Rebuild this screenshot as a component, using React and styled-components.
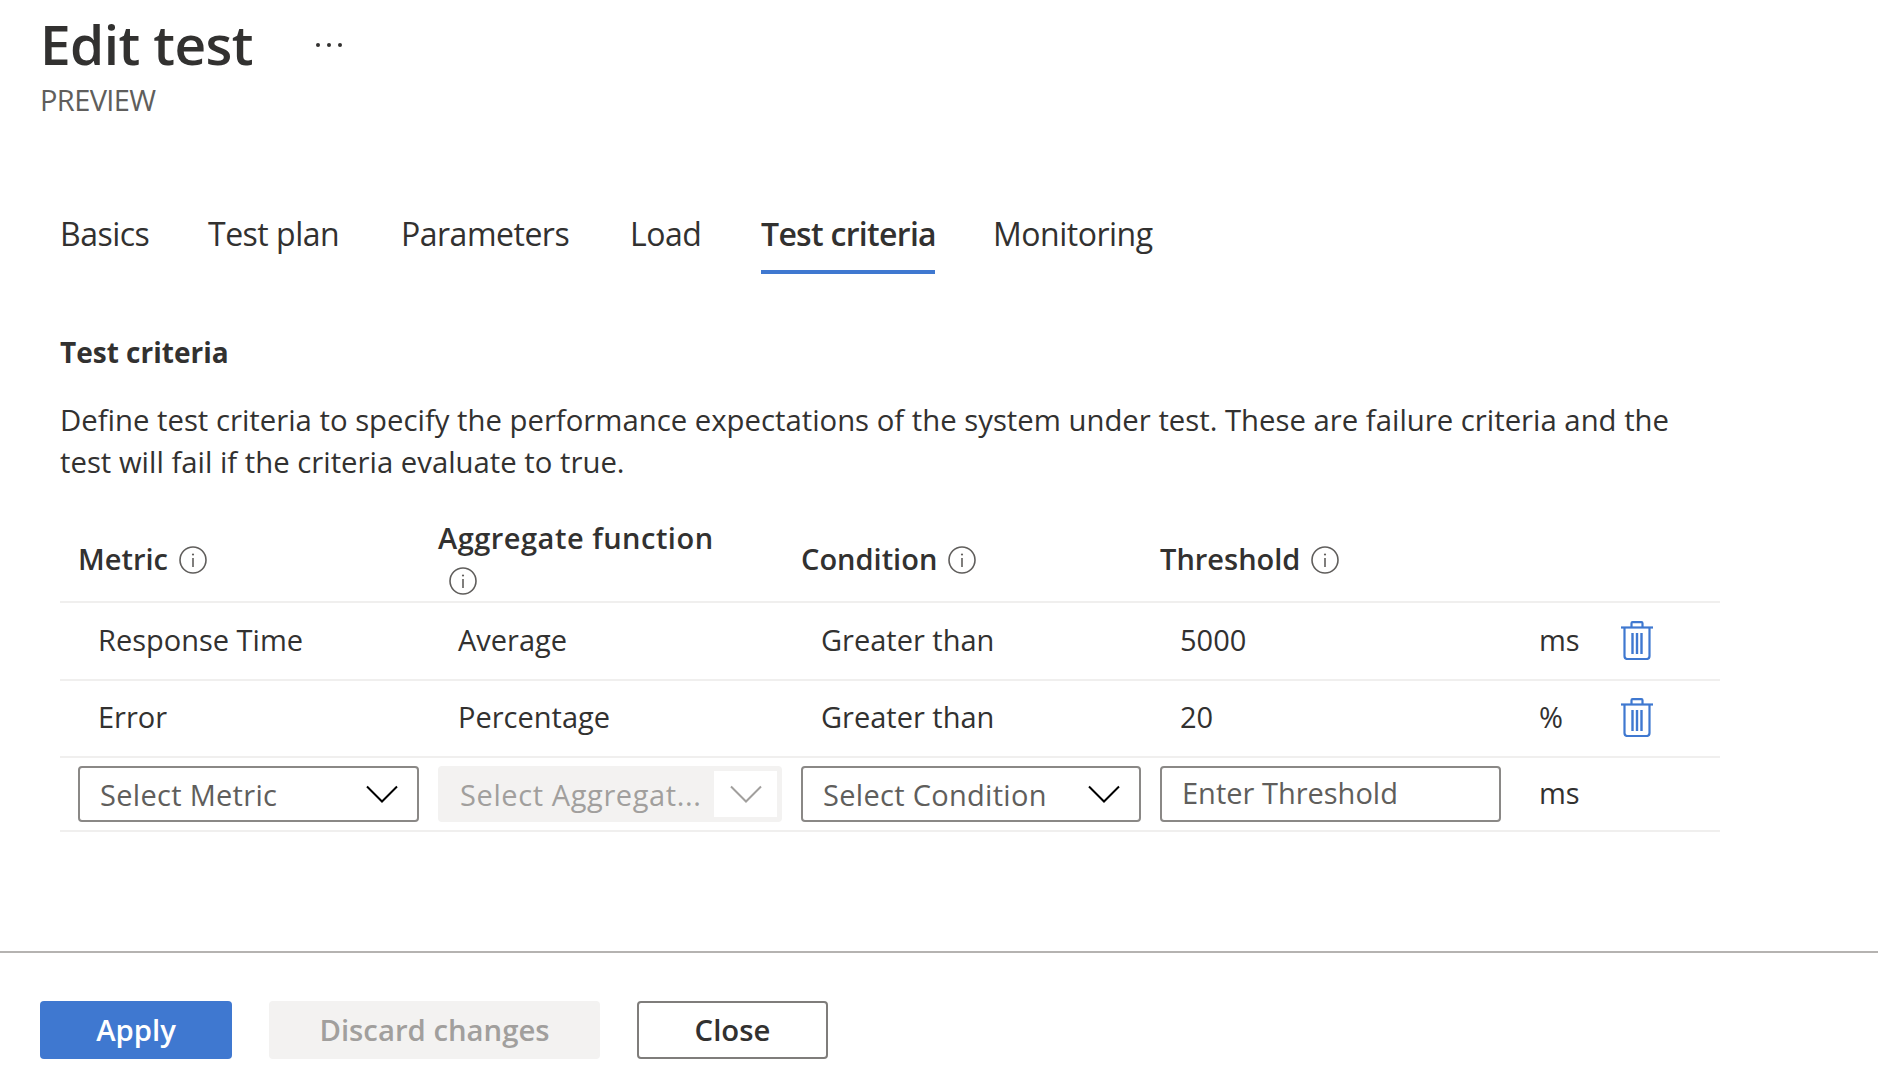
import React from "react";
import styled, { createGlobalStyle } from "styled-components";

const GlobalStyle = createGlobalStyle`
	html, body {
		margin: 0;
		padding: 0;
		background: #fff;
	}
	* {
		box-sizing: border-box;
	}
`;

const Page = styled.div`
	display: flex;
	flex-direction: column;
	min-height: 100vh;
	overflow: hidden;
	font-family: "Open Sans", "Noto Sans", sans-serif;
	color: #323130;
`;
const PageHeader = styled.header`
	padding: 10px 0 0 40px;
`;
const TitleRow = styled.div`
	display: flex;
	align-items: center;
	gap: 62px;
	height: 66px;
`;
const Title = styled.h1`
	margin: 0;
	font-size: 55px;
	font-weight: 600;
	letter-spacing: -0.6px;
`;
const MoreIcon = styled.svg`
	margin-top: 4px;
`;
const Preview = styled.div`
	margin-top: 5px;
	font-size: 29px;
	line-height: 38px;
	letter-spacing: -0.6px;
	color: #605e5c;
`;
const Tabs = styled.nav`
	display: flex;
	gap: 58px;
	margin: 85px 0 0 60px;
`;
const Tab = styled.div`
	width: ${(p) => p.$width}px;
	height: 70px;
	padding-top: 8px;
	font-size: 32px;
	line-height: 44px;
	white-space: nowrap;
	letter-spacing: ${(p) => (p.$active ? "-0.7px" : "-0.5px")};
	font-weight: ${(p) => (p.$active ? 600 : 400)};
	border-bottom: 4px solid ${(p) => (p.$active ? "#3f78d0" : "transparent")};
`;
const Section = styled.section`
	margin: 58px 0 0 60px;
	width: 1660px;
`;
const SectionTitle = styled.h2`
	margin: 0;
	font-size: 28px;
	line-height: 40px;
	font-weight: 700;
`;
const Description = styled.p`
	margin: 27px 0 28px;
	width: 1640px;
	font-size: 29.3px;
	line-height: 42px;
`;
const Row = styled.div`
	display: grid;
	grid-template-columns: 341px 344px 340px 341px 82px 40px;
	column-gap: 19px;
	align-items: center;
	height: ${(p) => p.$height}px;
	padding-left: 18px;
	border-bottom: 2px solid #f0efee;
`;
const HeadRow = styled(Row)`
	padding-top: 6px;
`;
const HeadCell = styled.div`
	font-size: 29px;
	line-height: 42px;
	font-weight: 600;
	letter-spacing: ${(p) => (p.$spread ? "0.5px" : "0")};
`;
const InfoWrap = styled.span`
	display: inline-flex;
	vertical-align: -4px;
	margin-left: 11px;
`;
const Cell = styled.div`
	padding: 0 0 4px 20px;
	font-size: 29px;
`;
const Unit = styled.div`
	padding: 0 0 4px 19px;
	font-size: 29px;
`;
const TrashButton = styled.button`
	display: flex;
	padding: 0 0 2px;
	border: 0;
	background: none;
`;
const Select = styled.div`
	display: flex;
	align-items: center;
	justify-content: space-between;
	height: 56px;
	padding: ${(p) => (p.$disabled ? "5px 5px 5px 22px" : "0 19px 0 20px")};
	border: ${(p) => (p.$disabled ? "0" : "2px solid #8a8886")};
	border-radius: 4px;
	background: ${(p) => (p.$disabled ? "#f3f2f1" : "#fff")};
	color: ${(p) => (p.$disabled ? "#a19f9d" : "#605e5c")};
	font-size: 29px;
	letter-spacing: ${(p) => (p.$disabled ? "0.6px" : "0.3px")};
`;
const ChevronBox = styled.span`
	display: flex;
	align-items: center;
	justify-content: center;
	flex: none;
	width: 63px;
	height: 100%;
	background: #fff;
`;
const ThresholdInput = styled.input`
	width: 100%;
	height: 56px;
	padding: 0 20px 4px;
	border: 2px solid #8a8886;
	border-radius: 4px;
	outline: none;
	font-family: inherit;
	font-size: 29px;
	&::placeholder {
		color: #605e5c;
		opacity: 1;
	}
`;
const Footer = styled.footer`
	display: flex;
	gap: 37px;
	margin-top: auto;
	height: 132px;
	padding: 48px 0 0 40px;
	border-top: 2px solid #b5b3b1;
`;
const Button = styled.button`
	width: ${(p) => p.$width}px;
	height: 58px;
	padding: 0;
	border: ${(p) => (p.$kind === "outline" ? "2px solid #7f7d7b" : "0")};
	border-radius: 4px;
	font-family: inherit;
	font-size: 29.3px;
	font-weight: 600;
	color: ${(p) =>
		p.$kind === "primary" ? "#fff" : p.$kind === "disabled" ? "#a19f9d" : "#323130"};
	background: ${(p) =>
		p.$kind === "primary" ? "#3f78d0" : p.$kind === "disabled" ? "#f3f2f1" : "#fff"};
`;

const InfoIcon = () => (
	<svg width="28" height="28" viewBox="0 0 28 28" fill="none" stroke="#605e5c">
		<circle cx="14" cy="14" r="13" strokeWidth="1.6" />
		<path d="M14 12v9" strokeWidth="1.6" />
		<circle cx="14" cy="8.5" r="1.1" fill="#605e5c" stroke="none" />
	</svg>
);

const Chevron = ({ color = "#000" }) => (
	<svg width="32" height="18" viewBox="0 0 32 18" fill="none" stroke={color} strokeWidth="2">
		<path d="M1 1.500l15 15 15-15" />
	</svg>
);

const More = () => (
	<MoreIcon width="28" height="6" viewBox="0 0 28 6" fill="#323130">
		<circle cx="3" cy="3" r="2" />
		<circle cx="14" cy="3" r="2" />
		<circle cx="25" cy="3" r="2" />
	</MoreIcon>
);

const TrashIcon = () => (
	<svg width="32" height="39" viewBox="0 0 32 39" fill="none" stroke="#3f78d0" strokeWidth="2.2">
		<path d="M0 6.500h32" />
		<path d="M10.500 6V2.200q0-1.100 1.100-1.100h8.800q1.100 0 1.100 1.100V6" />
		<path d="M3.500 7v28q0 3 3 3h19q3 0 3-3V7" />
		<path d="M11.500 12v21M16 12v21M20.500 12v21" strokeWidth="2.400" />
	</svg>
);

const tabs = [
	{ label: "Basics", width: 90 },
	{ label: "Test plan", width: 135 },
	{ label: "Parameters", width: 171 },
	{ label: "Load", width: 73 },
	{ label: "Test criteria", width: 174, active: true },
	{ label: "Monitoring", width: 166 },
];
const rows = [
	{ metric: "Response Time", agg: "Average", cond: "Greater than", value: "5000", unit: "ms", height: 78 },
	{ metric: "Error", agg: "Percentage", cond: "Greater than", value: "20", unit: "%", height: 77 },
];

const App = () => {
	return (
		<Page>
			<GlobalStyle />
			<PageHeader>
				<TitleRow>
					<Title>Edit test</Title>
					<More />
				</TitleRow>
				<Preview>PREVIEW</Preview>
			</PageHeader>

			<Tabs>
				{tabs.map((t) => (
					<Tab key={t.label} $width={t.width} $active={t.active}>
						{t.label}
					</Tab>
				))}
			</Tabs>

			<Section>
				<SectionTitle>Test criteria</SectionTitle>
				<Description>
					Define test criteria to specify the performance expectations of the system under test. These are failure
					criteria and the test will fail if the criteria evaluate to true.
				</Description>

				<HeadRow $height={92}>
					<HeadCell>
						Metric
						<InfoWrap>
							<InfoIcon />
						</InfoWrap>
					</HeadCell>
					<HeadCell $spread>
						Aggregate function
						<br />
						<InfoWrap>
							<InfoIcon />
						</InfoWrap>
					</HeadCell>
					<HeadCell>
						Condition
						<InfoWrap>
							<InfoIcon />
						</InfoWrap>
					</HeadCell>
					<HeadCell>
						Threshold
						<InfoWrap>
							<InfoIcon />
						</InfoWrap>
					</HeadCell>
				</HeadRow>

				{rows.map((r) => (
					<Row key={r.metric} $height={r.height}>
						<Cell>{r.metric}</Cell>
						<Cell>{r.agg}</Cell>
						<Cell>{r.cond}</Cell>
						<Cell>{r.value}</Cell>
						<Unit>{r.unit}</Unit>
						<TrashButton aria-label="Delete">
							<TrashIcon />
						</TrashButton>
					</Row>
				))}

				<Row $height={74}>
					<Select>
						Select Metric
						<Chevron />
					</Select>
					<Select $disabled>
						Select Aggregat...
						<ChevronBox>
							<Chevron color="#a19f9d" />
						</ChevronBox>
					</Select>
					<Select>
						Select Condition
						<Chevron />
					</Select>
					<ThresholdInput placeholder="Enter Threshold" />
					<Unit>ms</Unit>
				</Row>
			</Section>

			<Footer>
				<Button $kind="primary" $width={192}>
					Apply
				</Button>
				<Button $kind="disabled" $width={331}>
					Discard changes
				</Button>
				<Button $kind="outline" $width={191}>
					Close
				</Button>
			</Footer>
		</Page>
	);
};

export default App;
